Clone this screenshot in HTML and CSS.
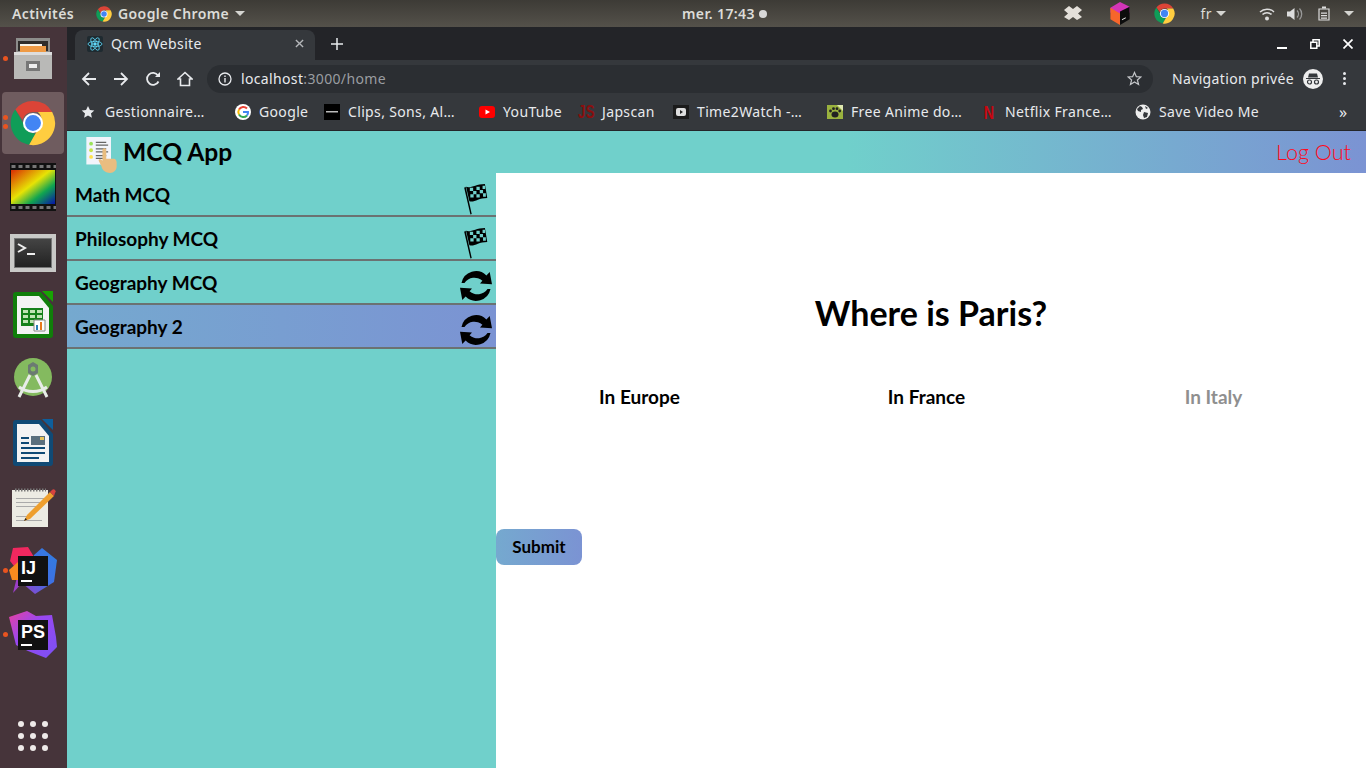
FILE: index.html
```html
<!DOCTYPE html>
<html lang="fr">
<head>
    <meta charset="UTF-8">
    <title>Qcm Website</title>
    <link rel="stylesheet" href="styles.css">
</head>
<body>
<svg class="defs" width="0" height="0">
    <symbol id="chrome" viewBox="0 0 48 48">
        <path fill="#db4437" d="M24 1a23 23 0 0 1 20 11.5H24a11.5 11.5 0 0 0-11 8L5.500 10A23 23 0 0 1 24 1z"/>
        <path fill="#0f9d58" d="M5.500 10 15 26.500a11.5 11.5 0 0 0 12 8.500L20 46.700A23 23 0 0 1 5.500 10z"/>
        <path fill="#ffcd40" d="M44 12.500A23 23 0 0 1 20 46.700L30 29a11.5 11.5 0 0 0-1-16.500z"/>
        <circle cx="24" cy="24" r="10.5" fill="#fff"/>
        <circle cx="24" cy="24" r="8.3" fill="#4285f4"/>
    </symbol>
    <symbol id="flag" viewBox="0 0 26 34">
        <path d="M1 5 2.500 4 9 33 7.600 33.500z"/>
        <path d="M3 4C8 6 13 1 23 1l2.500 15C16 16 12 21 6.500 19.500z"/>
        <path fill="#70d0cb" d="M7 5h3.500v3.500H7zM14 4h3.500v3.500H14zM20.500 3h2.700v3.500h-2.700zM10.500 8.500H14V12h-3.500zM17.500 7.500H21V11h-3.500zM7.500 12H11v3.500H7.500zM14 12h3.500v3.500H14zM21 11h3v3.500h-3z"/>
    </symbol>
    <symbol id="sync" viewBox="0 0 34 34">
        <path d="M2.500 14A14.800 14.800 0 0 1 27.400 6.500l3.300-3.500 2.300 12.300-12-.8 2.400-2.700A11.800 11.800 0 0 0 5.500 14z"/>
        <path d="M31.500 20A14.800 14.800 0 0 1 6.600 27.500l-3.300 3.500-2.300-12.300 12 .8-2.400 2.700A11.800 11.800 0 0 0 28.500 20z"/>
    </symbol>
    <linearGradient id="spec" x1="0" y1="0" x2="1" y2="1">
        <stop offset="0" stop-color="#d92b04"/>
        <stop offset=".45" stop-color="#e7e305"/>
        <stop offset=".7" stop-color="#11a550"/>
        <stop offset="1" stop-color="#0713a8"/>
    </linearGradient>
    <linearGradient id="term" x1="0" y1="0" x2="0" y2="1">
        <stop offset="0" stop-color="#444"/>
        <stop offset="1" stop-color="#222"/>
    </linearGradient>
    <linearGradient id="ij-blue" x1="0" y1="1" x2="1" y2="0">
        <stop offset="0" stop-color="#9a3ec8"/>
        <stop offset=".5" stop-color="#3f6fe4"/>
        <stop offset="1" stop-color="#2f7fe0"/>
    </linearGradient>
    <linearGradient id="ps-violet" x1="0" y1="0" x2="1" y2="1">
        <stop offset="0" stop-color="#e8409e"/>
        <stop offset=".4" stop-color="#9a48f0"/>
        <stop offset="1" stop-color="#7a50f4"/>
    </linearGradient>
    <pattern id="perf" width="7" height="48" patternUnits="userSpaceOnUse">
        <rect width="4" height="3" x="1.500" y="2" fill="#777"/>
        <rect width="4" height="3" x="1.500" y="43" fill="#777"/>
    </pattern>
</svg>

<header class="topbar">
    <span class="activities">Activités</span>
    <span class="app-menu">
        <svg class="ico16"><use href="#chrome"/></svg>
        Google Chrome
        <i class="caret"></i>
    </span>
    <span class="clock">mer. 17:43 <i class="clock-dot"></i></span>
    <span class="tray">
        <svg class="tray-drop" viewBox="0 0 18 16"><path fill="#e4e0da" d="M5 0l4 3 4-3 5 4-4 3.500 4 3.500-5 3-4-3-4 3-5-3 4-3.500L0 4z"/></svg>
        <svg class="tray-box" viewBox="0 0 20 24"><path fill="#d335b8" d="M10 0l10 5v6L10 16 0 11V6z"/><path fill="#f7662b" d="M0 6l10 6v12L0 18z"/><path fill="#0c0c0c" d="M10 10l10-5v13l-10 6z"/><path fill="#eee" d="M12 18l4-2v1l-4 2z"/></svg>
        <svg class="ico20"><use href="#chrome"/></svg>
        <span class="tray-lang">fr <i class="caret"></i></span>
        <svg class="tray-wifi" viewBox="0 0 16 14"><path fill="none" stroke="#ddd" stroke-width="1.500" d="M1 5a10 10 0 0 1 14 0M3.500 7.500a6.500 6.500 0 0 1 9 0"/><circle cx="8" cy="11.500" r="2" fill="#ddd"/></svg>
        <svg class="tray-vol" viewBox="0 0 16 14"><path fill="#ddd" d="M0 4.500h3L7.500 1v12L3 9.500H0z"/><path fill="none" stroke="#999" stroke-width="1.300" d="M10 3.500a5 5 0 0 1 0 7M12.500 1.500a8 8 0 0 1 0 11"/></svg>
        <svg class="tray-bat" viewBox="0 0 12 14"><path fill="none" stroke="#ddd" stroke-width="1.200" d="M1 2.500h10v11H1z"/><path fill="#ddd" d="M4 0h4v2H4zM3 6h6v1.200H3zM3 8.500h6v1.200H3zM3 11h6v1.200H3z"/></svg>
        <i class="caret"></i>
    </span>
</header>

<div class="desk">
    <aside class="dock">
        <div class="dock-item has-dot">
            <svg viewBox="-1 -2 46 48" class="dock-ico"><path fill="#8d8d8b" d="M5 1h34v14H5z"/><path fill="#2f2c2a" d="M7 4h30v10H7z"/><path fill="#ee9a45" d="M9 9h26v6H9z"/><path fill="#f6f2e8" d="M9 7h22v2H9z"/><path fill="#b9b9b7" d="M3 15h38v27H3z"/><path fill="#ddd" d="M3 15h38v3H3z"/><path fill="#777" d="M15 24h14v10H15z"/><path fill="#eee" d="M18 27h8v4h-8z"/></svg>
        </div>
        <div class="dock-item is-active has-dots">
            <svg class="dock-chrome"><use href="#chrome"/></svg>
        </div>
        <div class="dock-item">
            <svg viewBox="0 0 46 48" class="dock-ico"><path fill="#111" d="M0 0h46v48H0z"/><path fill="url(#perf)" d="M0 0h46v48H0z"/><path fill="url(#spec)" d="M1 7h44v34H1z"/></svg>
        </div>
        <div class="dock-item">
            <svg viewBox="0 -7 46 48" class="dock-ico"><path fill="#c9c9c7" d="M0 0h46v38H0z"/><path fill="#777" d="M4 4h38v30H4z"/><path fill="url(#term)" d="M5 5h36v28H5z"/><path fill="none" stroke="#eee" stroke-width="2" d="M8 10l7 4-7 4"/><path fill="#eee" d="M17 19h8v2h-8z"/></svg>
        </div>
        <div class="dock-item">
            <svg viewBox="0 0 40 48" class="dock-ico"><path fill="#18a303" d="M29 0h11v11z"/><path fill="#107e0a" d="M3 1h25l12 14v29a3 3 0 0 1-3 3H3a3 3 0 0 1-3-3V4a3 3 0 0 1 3-3z"/><path fill="#f3f3f3" d="M4 5h22l10 12v26H4z"/><path fill="#15801a" d="M8 17h22v18H8z"/><path fill="#bfe3b4" d="M10 19h5v3h-5zM17 19h5v3h-5zM24 19h5v3h-5zM10 24h5v3h-5zM17 24h5v3h-5zM24 24h5v3h-5zM10 29h5v3h-5zM17 29h5v3h-5z"/><path fill="#fff" stroke="#888" d="M21 29h11v11H21z"/><path fill="#e8781d" d="M27 31h2v8h-2z"/><path fill="#2a7fba" d="M23 34h2v5h-2z"/></svg>
        </div>
        <div class="dock-item">
            <svg viewBox="-3 -2 46 48" class="dock-ico"><circle cx="20" cy="20" r="19" fill="#84ba5f"/><path fill="#6b7a72" d="M15 8l5-3 5 3v8l-5 3-5-3z"/><circle cx="20" cy="12" r="2.500" fill="#84ba5f"/><path fill="none" stroke="#e8ece8" stroke-width="3" d="M17 18L6 40M23 18l11 22M6 30c8 6 20 6 28 0"/></svg>
        </div>
        <div class="dock-item">
            <svg viewBox="0 0 40 48" class="dock-ico"><path fill="#0e5f9c" d="M29 0h11v11z"/><path fill="#104a75" d="M3 1h25l12 14v29a3 3 0 0 1-3 3H3a3 3 0 0 1-3-3V4a3 3 0 0 1 3-3z"/><path fill="#f3f3f3" d="M4 5h22l10 12v26H4z"/><path fill="#104a75" d="M8 18h8v2H8zM8 23h8v2H8zM8 28h24v2H8zM8 33h24v2H8zM8 38h18v2H8z"/><path fill="#5b6f7d" d="M18 17h14v9H18z"/><path fill="#e6c45c" d="M27 18h4v3h-4z"/></svg>
        </div>
        <div class="dock-item">
            <svg viewBox="0 0 46 42" class="dock-ico"><path fill="#ecebe3" d="M2 4h36v37H2z"/><path fill="#aaa" d="M6 12h28v1H6zM6 16h24v1H6zM6 20h20v1H6zM6 30h12v1H6zM6 34h26v1H6z"/><path fill="none" stroke="#777" stroke-width="3" stroke-dasharray="1.500 1.500" d="M5 4h31"/><path fill="#ee9f2e" d="M40 6l4 4-24 23-6 2 3-6z"/><path fill="#d8423f" d="M40 6l2-2a2 2 0 0 1 3 0 2 2 0 0 1 0 3l-1 3z"/><path fill="#222" d="M14 35l1.500-3 1.500 1.500z"/></svg>
        </div>
        <div class="dock-item has-dot">
            <svg viewBox="0 0 46 48" class="dock-ico"><path fill="url(#ij-blue)" d="M32 1l15 12-3 22-19 12-13-11L24 8z"/><path fill="#9a3ec8" d="M3 46l5-20h12l-8 10z"/><path fill="#f0285f" d="M3 1l15-1 6 10L8 24 0 14z"/><path fill="#f78b1f" d="M-1 23l9-8v18H2z"/><path fill="#111" d="M8 9h30v30H8z"/><text class="jb-text" x="11" y="27">IJ</text><path fill="#fff" d="M11 33h11v2H11z"/></svg>
        </div>
        <div class="dock-item has-dot">
            <svg viewBox="0 0 46 48" class="dock-ico"><path fill="url(#ps-violet)" d="M-1 6L17 0l9 5 16-1 4 22 1 10-11 11-18-7-12-6z"/><path fill="#111" d="M8 9h30v30H8z"/><text class="jb-text" x="11" y="27">PS</text><path fill="#fff" d="M11 33h11v2H11z"/></svg>
        </div>
        <div class="dock-grid">
            <i></i><i></i><i></i><i></i><i></i><i></i><i></i><i></i><i></i>
        </div>
    </aside>

    <div class="browser">
        <div class="tabstrip">
            <div class="tab">
                <span class="tab-favicon">
                    <svg viewBox="0 0 16 16" fill="none" stroke="#61dafb" stroke-width=".8"><ellipse cx="8" cy="8" rx="7" ry="2.7"/><ellipse cx="8" cy="8" rx="7" ry="2.7" transform="rotate(60 8 8)"/><ellipse cx="8" cy="8" rx="7" ry="2.7" transform="rotate(120 8 8)"/><circle cx="8" cy="8" r="1.300" fill="#61dafb"/></svg>
                </span>
                <span class="tab-title">Qcm Website</span>
                <svg class="tab-close" viewBox="0 0 10 10"><path stroke="#b5b7ba" stroke-width="1.500" d="M1 1l8 8M9 1l-8 8"/></svg>
            </div>
            <svg class="tab-new" viewBox="0 0 12 12"><path stroke="#e8eaed" stroke-width="1.500" d="M6 0v12M0 6h12"/></svg>
            <div class="win-btns">
                <svg viewBox="0 0 10 10"><path fill="#fff" d="M0 8h10v2H0z"/></svg>
                <svg viewBox="0 0 10 10"><path fill="none" stroke="#fff" stroke-width="1.500" d="M.8 3.200h6v6h-6zM3 3V.8h6.200V7H7"/></svg>
                <svg viewBox="0 0 10 10"><path stroke="#fff" stroke-width="1.700" d="M.5.500l9 9M9.500.500l-9 9"/></svg>
            </div>
        </div>

        <div class="toolbar">
            <svg class="nav-ico" viewBox="0 0 16 16"><path fill="none" stroke="#e8eaed" stroke-width="1.800" d="M15 8H2M8 2L2 8l6 6"/></svg>
            <svg class="nav-ico" viewBox="0 0 16 16"><path fill="none" stroke="#e8eaed" stroke-width="1.800" d="M1 8h13M8 2l6 6-6 6"/></svg>
            <svg class="nav-ico" viewBox="0 0 16 16"><path fill="none" stroke="#e8eaed" stroke-width="1.800" d="M13.500 10.500A6 6 0 1 1 13 4.500"/><path fill="#e8eaed" d="M10 6h5V1z"/></svg>
            <svg class="nav-ico" viewBox="0 0 16 16"><path fill="none" stroke="#e8eaed" stroke-width="1.600" d="M1 8l7-6.500L15 8h-2.500v6.500h-9V8z"/></svg>
            <div class="omnibox">
                <svg class="omni-info" viewBox="0 0 14 14"><circle cx="7" cy="7" r="6" fill="none" stroke="#e8eaed" stroke-width="1.300"/><path fill="#e8eaed" d="M6.300 6h1.400v4.500H6.300zM6.300 3.500h1.400v1.400H6.300z"/></svg>
                <span class="omni-url">localhost<em>:3000/home</em></span>
                <svg class="omni-star" viewBox="0 0 16 16"><path fill="none" stroke="#c4c6c9" stroke-width="1.300" d="M8 1.500l2 4.500 4.800.4-3.700 3.200 1.200 4.800L8 11.800l-4.300 2.600 1.200-4.800L1.200 6.400 6 6z"/></svg>
            </div>
            <span class="incognito">Navigation privée</span>
            <svg class="incognito-ico" viewBox="0 0 20 20"><circle cx="10" cy="10" r="10" fill="#eee"/><path fill="#35383c" d="M3 9h14v1H3zM6 4.500h8L15 8.500H5z"/><circle cx="6.500" cy="13" r="2" fill="none" stroke="#35383c" stroke-width="1.200"/><circle cx="13.500" cy="13" r="2" fill="none" stroke="#35383c" stroke-width="1.200"/></svg>
            <span class="kebab"><i></i><i></i><i></i></span>
        </div>

        <div class="bookmarks">
            <a class="bm"><svg viewBox="0 0 16 16"><path fill="#e8eaed" d="M8 1l2.200 4.700 5 .5-3.800 3.400 1.100 5L8 12l-4.500 2.600 1.100-5L.8 6.200l5-.5z"/></svg>Gestionnaire…</a>
            <a class="bm"><svg viewBox="0 0 16 16"><circle cx="8" cy="8" r="8" fill="#fff"/><path fill="none" stroke="#ea4335" stroke-width="2" d="M12 4.500A5 5 0 0 0 4 5.500"/><path fill="none" stroke="#fbbc05" stroke-width="2" d="M4 5.500a5 5 0 0 0 0 5"/><path fill="none" stroke="#34a853" stroke-width="2" d="M4 10.500a5 5 0 0 0 8 1"/><path fill="none" stroke="#4285f4" stroke-width="2" d="M12 11.500A5 5 0 0 0 13 8H8"/></svg>Google</a>
            <a class="bm"><svg viewBox="0 0 16 16"><path fill="#000" d="M0 0h16v16H0z"/><path fill="#bbb" d="M2 7h12v1.500H2z"/></svg>Clips, Sons, Al…</a>
            <a class="bm"><svg viewBox="0 0 16 16"><rect y="2" width="16" height="12" rx="3" fill="#f00"/><path fill="#fff" d="M6.500 5.500L11 8l-4.500 2.500z"/></svg>YouTube</a>
            <a class="bm"><svg viewBox="0 0 16 16"><text class="fav-js" x="0" y="10.500" transform="scale(.95 1.3)">JS</text></svg>Japscan</a>
            <a class="bm"><svg viewBox="0 0 16 16"><path fill="#1b1b1b" d="M0 1h16v14H0z"/><rect x="3" y="4" width="10" height="8" rx="2" fill="#ddd"/><path fill="#222" d="M7 6l3 2-3 2z"/></svg>Time2Watch -…</a>
            <a class="bm"><svg viewBox="0 0 16 16"><path fill="#9ab23e" d="M0 1h16v14H0z"/><path fill="#dfe8b0" d="M10 1h6v6z"/><ellipse cx="8" cy="10.500" rx="3.500" ry="3" fill="#222"/><circle cx="3.500" cy="7" r="1.400" fill="#222"/><circle cx="6.500" cy="4.700" r="1.400" fill="#222"/><circle cx="10" cy="4.700" r="1.400" fill="#222"/><circle cx="12.700" cy="7" r="1.400" fill="#222"/></svg>Free Anime do…</a>
            <a class="bm"><svg viewBox="0 0 16 16"><text class="fav-n" x="10.670" y="15" transform="scale(.75 1)">N</text></svg>Netflix France…</a>
            <a class="bm"><svg viewBox="0 0 16 16"><circle cx="8" cy="8" r="7.500" fill="#eee"/><path fill="#35383c" d="M2 5l3-3 2 1 1 2-2 1v2l-3-1zM9 8l4 1-1 4-3 1-1-3zM10 2l3 2-2 1z"/></svg>Save Video Me</a>
            <span class="bm-more">»</span>
        </div>

        <div class="app">
            <div class="app-head">
                <div class="brand">
                    <svg class="brand-ico" viewBox="0 0 32 38"><path fill="#f2f4fb" d="M0 0h26v29H0z"/><circle cx="5" cy="7" r="2" fill="#9be35a"/><circle cx="5" cy="14" r="2" fill="#c6e34a"/><circle cx="5" cy="21" r="2" fill="#ffe14d"/><path fill="#666" d="M10 5h11v1.300H10zM10 8h13v1.300H10zM10 12h11v1.300H10zM10 15h13v1.300H10zM10 19h11v1.300H10zM10 22h9v1.300H10z"/><path fill="#e9bd80" d="M17 14a2 2 0 0 1 4 0v9h8c2 0 3 2 3 4v4c0 4-3 7-7 7s-8-2-9-7l-3-6c0-2 2-2 4 0z"/></svg>
                    <span class="brand-name">MCQ App</span>
                </div>
                <a class="logout">Log Out</a>
            </div>
            <div class="app-body">
                <nav class="sidebar">
                    <div class="qcm-row"><span>Math MCQ</span><svg class="flag"><use href="#flag"/></svg></div>
                    <div class="qcm-row"><span>Philosophy MCQ</span><svg class="flag"><use href="#flag"/></svg></div>
                    <div class="qcm-row"><span>Geography MCQ</span><svg class="sync"><use href="#sync"/></svg></div>
                    <div class="qcm-row is-current"><span>Geography 2</span><svg class="sync"><use href="#sync"/></svg></div>
                </nav>
                <main class="question">
                    <h1>Where is Paris?</h1>
                    <div class="answers">
                        <span>In Europe</span>
                        <span>In France</span>
                        <span class="is-off">In Italy</span>
                    </div>
                    <button class="submit">Submit</button>
                </main>
            </div>
        </div>
    </div>
</div>
</body>
</html>
```

FILE: styles.css
```css
html, body {
    height: 100%;
    margin: 0;
    padding: 0;
    overflow: hidden;
    font-family: "Noto Sans", sans-serif;
}

body {
    display: flex;
    flex-direction: column;
    width: 1366px;
    height: 768px;
}

.defs {
    position: absolute;
}

i {
    font-style: normal;
}

/* ubuntu top bar */
.topbar {
    flex: 0 0 27px;
    display: flex;
    align-items: center;
    position: relative;
    padding-left: 12px;
    background: linear-gradient(#3d3b36, #54514a);
    color: #dcdcd8;
    font-size: 14px;
    font-weight: 600;
    letter-spacing: .4px;
}

.activities {
    width: 84px;
}

.app-menu {
    display: flex;
    align-items: center;
    gap: 6px;
}

.ico16 {
    width: 16px;
    height: 16px;
}

.ico20 {
    width: 21px;
    height: 21px;
}

.caret {
    display: inline-block;
    border: 5px solid transparent;
    border-top: 5px solid #d5d5d1;
    border-bottom: 0;
}

.clock {
    position: absolute;
    left: 682px;
    display: flex;
    align-items: center;
    gap: 4px;
}

.clock-dot {
    width: 8px;
    height: 8px;
    border-radius: 50%;
    background: #d8d8d8;
}

.tray {
    margin-left: auto;
    display: flex;
    align-items: center;
    padding-right: 12px;
}

.tray-drop {
    width: 18px;
    height: 16px;
    margin-right: 28px;
}

.tray-box {
    width: 20px;
    height: 23px;
    margin-right: 24px;
}

.tray-lang {
    display: flex;
    align-items: center;
    gap: 4px;
    margin: 0 33px 0 26px;
    font-weight: 400;
}

.tray-wifi {
    width: 16px;
    height: 14px;
    margin-right: 12px;
}

.tray-vol {
    width: 16px;
    height: 14px;
    margin-right: 15px;
}

.tray-bat {
    width: 12px;
    height: 15px;
    margin-right: 14px;
}

.desk {
    flex: 1;
    display: flex;
    min-height: 0;
}

/* dock */
.dock {
    flex: 0 0 67px;
    display: flex;
    flex-direction: column;
    gap: 2px;
    padding: 1px 0 0 2px;
    box-sizing: border-box;
    background: #46343a;
}

.dock-item {
    position: relative;
    width: 62px;
    height: 62px;
    display: flex;
    align-items: center;
    justify-content: center;
    border-radius: 4px;
}

.dock-ico {
    width: 46px;
    height: 48px;
    overflow: visible;
}

.jb-text {
    font-family: "Liberation Sans", sans-serif;
    font-size: 18px;
    font-weight: 700;
    fill: #fff;
}

.is-active {
    background: #6f5c5f;
}

.dock-chrome {
    width: 46px;
    height: 46px;
}

.has-dot::before, .has-dots::before, .has-dots::after {
    content: "";
    position: absolute;
    left: 1px;
    top: 28px;
    width: 5px;
    height: 5px;
    border-radius: 50%;
    background: #e95420;
}

.has-dots::before {
    top: 23px;
}

.has-dots::after {
    top: 32px;
}

.dock-grid {
    margin: auto 0 17px 16px;
    display: grid;
    grid-template-columns: repeat(3, 6px);
    gap: 6px;
}

.dock-grid i {
    width: 6px;
    height: 6px;
    border-radius: 50%;
    background: #eeeae8;
}

/* chrome */
.browser {
    flex: 1;
    display: flex;
    flex-direction: column;
    min-width: 0;
    color: #e8eaed;
    font-size: 14px;
    letter-spacing: .35px;
}

.tabstrip {
    flex: 0 0 33px;
    display: flex;
    align-items: flex-end;
    background: #232428;
    padding-left: 8px;
}

.tab {
    width: 240px;
    height: 30px;
    box-sizing: border-box;
    display: flex;
    align-items: center;
    padding: 0 11px 3px 12px;
    background: #35383c;
    border-radius: 8px 8px 0 0;
}

.tab-favicon {
    width: 16px;
    height: 16px;
    background: #1e2a30;
    border-radius: 2px;
    margin-right: 8px;
}

.tab-favicon svg {
    display: block;
}

.tab-title {
    flex: 1;
}

.tab-close {
    width: 9px;
    height: 9px;
}

.tab-new {
    width: 12px;
    height: 12px;
    margin: 0 0 10px 16px;
}

.win-btns {
    margin: 0 13px 11px auto;
    display: flex;
    gap: 23px;
}

.win-btns svg {
    width: 10px;
    height: 10px;
}

.toolbar {
    flex: 0 0 37px;
    display: flex;
    align-items: center;
    padding-left: 14px;
    background: #35383c;
}

.nav-ico {
    width: 16px;
    height: 16px;
    margin-right: 16px;
}

.omnibox {
    width: 946px;
    height: 28px;
    margin-left: -2px;
    box-sizing: border-box;
    display: flex;
    align-items: center;
    padding: 0 11px;
    background: #2b2e32;
    border-radius: 14px;
}

.omni-info {
    width: 14px;
    height: 14px;
    margin-right: 9px;
}

.omni-url {
    flex: 1;
}

.omni-url em {
    font-style: normal;
    color: #9a9da1;
}

.omni-star {
    width: 15px;
    height: 15px;
}

.incognito {
    margin-left: 19px;
    width: 131px;
    white-space: nowrap;
}

.incognito-ico {
    width: 20px;
    height: 20px;
}

.kebab {
    margin-left: 20px;
    display: flex;
    flex-direction: column;
    gap: 2px;
}

.kebab i {
    width: 3px;
    height: 3px;
    border-radius: 50%;
    background: #e8eaed;
}

.bookmarks {
    flex: 0 0 34px;
    box-sizing: border-box;
    display: grid;
    grid-template-columns: 154px 89px 155px 99px 95px 154px 154px 154px 1fr 27px;
    align-items: center;
    padding: 0 0 4px 14px;
    background: #35383c;
    border-bottom: 1px solid #24262a;
    white-space: nowrap;
}

.bm {
    display: flex;
    align-items: center;
    gap: 8px;
}

.bm svg {
    width: 16px;
    height: 16px;
    flex: none;
    overflow: visible;
}

.bm:first-child svg {
    width: 14px;
    height: 14px;
    margin-right: 2px;
}

.fav-js {
    font-family: "Liberation Sans", sans-serif;
    font-size: 14px;
    font-weight: 700;
    fill: #8a0f0f;
}

.fav-n {
    font-family: "Liberation Sans", sans-serif;
    font-size: 19px;
    font-weight: 700;
    text-anchor: middle;
    fill: #c8060f;
}

.bm-more {
    font-size: 16px;
    line-height: 1;
}

/* the mcq app */
.app {
    flex: 1;
    display: flex;
    flex-direction: column;
    min-height: 0;
    background: #fff;
    color: #000;
    letter-spacing: 0;
    font-family: "Lato", sans-serif;
}

.app-head {
    flex: 0 0 42px;
    display: flex;
    align-items: center;
    justify-content: space-between;
    padding: 0 15px 0 19px;
    background: linear-gradient(to right, #70d0cb 60%, #7b93d3);
}

.brand {
    display: flex;
    align-items: center;
    gap: 6px;
}

.brand-ico {
    width: 31px;
    height: 36px;
    margin-top: 6px;
}

.brand-name {
    margin-bottom: 2px;
    font-size: 24.6px;
    font-weight: 700;
}

.logout {
    font-size: 21.6px;
    font-weight: 300;
    color: #ff0a20;
}

.app-body {
    flex: 1;
    display: flex;
    min-height: 0;
}

.sidebar {
    flex: 0 0 429px;
    background: #70d0cb;
}

.qcm-row {
    height: 44px;
    box-sizing: border-box;
    display: flex;
    align-items: center;
    justify-content: space-between;
    padding-left: 8px;
    border-bottom: 2px solid #6b7272;
    font-size: 19px;
    font-weight: 700;
}

.qcm-row span {
    margin-top: 1px;
}

.is-current {
    background: linear-gradient(to right, #75a9cf, #7b93d3);
}

.flag {
    align-self: flex-end;
    width: 25px;
    height: 32px;
    margin-right: 8px;
}

.sync {
    align-self: flex-start;
    width: 34px;
    height: 34px;
    margin: 8px 3px 0 0;
}

.question {
    flex: 1;
    display: flex;
    flex-direction: column;
    align-items: flex-start;
}

.question h1 {
    align-self: stretch;
    margin: 121px 0 0;
    text-align: center;
    font-size: 34px;
    line-height: 38px;
    font-weight: 700;
}

.answers {
    display: grid;
    grid-template-columns: repeat(3, 287px);
    margin-top: 53px;
    text-align: center;
    font-size: 19px;
    line-height: 24px;
    font-weight: 700;
}

.is-off {
    color: #8f8f8f;
}

.submit {
    width: 86px;
    height: 36px;
    margin-top: 120px;
    padding: 0 0 2px;
    border: 0;
    border-radius: 8px;
    background: linear-gradient(to right, #75a9cf, #7b93d3);
    font-family: "Lato", sans-serif;
    font-size: 17px;
    font-weight: 700;
    color: #000;
}
```
